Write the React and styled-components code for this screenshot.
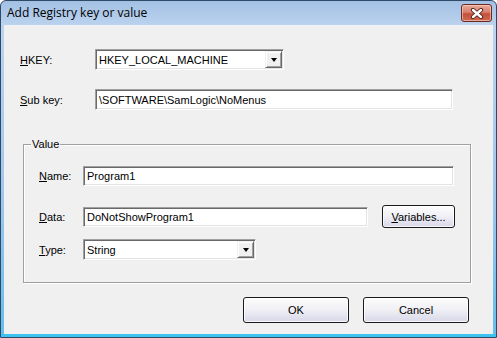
import React from 'react';
import styled, { createGlobalStyle } from 'styled-components';

const GlobalStyle = createGlobalStyle`
  html, body {
    margin: 0;
    padding: 0;
    background: #fff;
  }
  body {
    width: 497px;
    height: 338px;
    overflow: hidden;
    font-family: "Liberation Sans", Arial, sans-serif;
    font-size: 11px;
    color: #000;
  }
`;

const Window = styled.div`
  box-sizing: border-box;
  width: 497px;
  height: 338px;
  display: flex;
  flex-direction: column;
  border: 1px solid #2f4a68;
  border-radius: 6px 6px 0 0;
  padding: 0 3px 3px;
  background: linear-gradient(#a3c0e3, #bcd4ef 26px, #9ec6ec 200px, #62bfea);
  box-shadow: inset 0 -3px 0 #3cc4ef;
`;

const TitleBar = styled.div`
  height: 24px;
  display: flex;
  align-items: flex-start;
  justify-content: space-between;
  padding: 0 1px 0 3px;
`;

const Title = styled.div`
  font-family: "Open Sans", "Noto Sans", sans-serif;
  font-size: 12px;
  line-height: 24px;
  color: #000;
`;

const CloseButton = styled.div`
  box-sizing: border-box;
  margin-top: 3px;
  width: 31px;
  height: 18px;
  border: 1px solid #6a2a22;
  border-radius: 3px;
  background: linear-gradient(#e9a99a, #d8806c 45%, #c4503a 55%, #cf6a52);
  box-shadow: inset 0 0 0 1px rgba(255, 220, 210, 0.55);
  display: flex;
  align-items: center;
  justify-content: center;
`;

const Client = styled.div`
  flex: 1;
  background: #f0f0f0;
  display: flex;
  flex-direction: column;
  padding: 24px 0 0 16px;
`;

const Row = styled.div`
  display: flex;
  align-items: center;
  height: ${p => p.h}px;
  margin-top: ${p => p.mt || 0}px;
`;

const Label = styled.div`
  width: ${p => p.w}px;
  flex-shrink: 0;
  white-space: nowrap;
`;

const Key = styled.span`
  text-decoration: underline;
`;

const Field = styled.div`
  box-sizing: border-box;
  width: ${p => p.w}px;
  height: ${p => p.h}px;
  background: #fff;
  border: 1px solid;
  border-color: #a0a0a0 #fff #fff #a0a0a0;
  box-shadow: inset 1px 1px 0 #696969, inset -1px -1px 0 #e3e3e3;
  display: flex;
  align-items: center;
  padding: 0 2px 0 3px;
  white-space: nowrap;
  overflow: hidden;
`;

const ComboText = styled.div`
  flex: 1;
`;

const DropButton = styled.div`
  box-sizing: border-box;
  width: 17px;
  height: ${p => p.h}px;
  margin-right: -1px;
  background: #f0f0f0;
  border: 1px solid;
  border-color: #f0f0f0 #696969 #696969 #f0f0f0;
  box-shadow: inset 1px 1px 0 #fff, inset -1px -1px 0 #a0a0a0;
  display: flex;
  align-items: center;
  justify-content: center;
`;

const Arrow = styled.div`
  width: 0;
  height: 0;
  border-left: 3.5px solid transparent;
  border-right: 3.5px solid transparent;
  border-top: 4px solid #000;
  margin-top: 1px;
`;

const Group = styled.div`
  position: relative;
  box-sizing: border-box;
  margin: 34px 0 0 3px;
  width: 448px;
  height: 139px;
  border: 1px solid #a0a0a0;
  box-shadow: inset 1px 1px 0 #fff, 1px 1px 0 #fff;
  padding: 21px 0 0 15px;
`;

const Legend = styled.div`
  position: absolute;
  top: -7px;
  left: 7px;
  padding: 0 1px;
  background: #f0f0f0;
  line-height: 13px;
`;

const Button = styled.div`
  box-sizing: border-box;
  width: ${p => p.w}px;
  height: ${p => p.h}px;
  border: 1px solid #1a1a1a;
  border-radius: 3px;
  background: linear-gradient(#fdfdfd, #f1f1f6 45%, #d8d7e9);
  box-shadow: inset 0 0 0 1px rgba(255, 255, 255, 0.8);
  display: flex;
  align-items: center;
  justify-content: center;
  margin-left: ${p => p.ml || 0}px;
`;

const ButtonRow = styled.div`
  display: flex;
  justify-content: flex-end;
  gap: 14px;
  margin-top: 14px;
  padding-right: 24px;
`;

function Combo({ w, h, value }) {
  return (
    <Field w={w} h={h} style={{ paddingRight: 2 }}>
      <ComboText>{value}</ComboText>
      <DropButton h={h - 4}>
        <Arrow />
      </DropButton>
    </Field>
  );
}

export default function App() {
  return (
    <>
      <GlobalStyle />
      <Window>
        <TitleBar>
          <Title>Add Registry key or value</Title>
          <CloseButton>
            <svg width="14" height="11" viewBox="0 0 14 11">
              <path d="M3 2 L11 9 M11 2 L3 9" stroke="#4a2019" strokeWidth="4.2" strokeLinecap="round" />
              <path d="M3 2 L11 9 M11 2 L3 9" stroke="#fff" strokeWidth="2.4" strokeLinecap="round" />
            </svg>
          </CloseButton>
        </TitleBar>
        <Client>
          <Row h={21}>
            <Label w={75}><Key>H</Key>KEY:</Label>
            <Combo w={189} h={21} value="HKEY_LOCAL_MACHINE" />
          </Row>
          <Row h={21} mt={19}>
            <Label w={75}><Key>S</Key>ub key:</Label>
            <Field w={358} h={21}>\SOFTWARE\SamLogic\NoMenus</Field>
          </Row>
          <Group>
            <Legend>Value</Legend>
            <Row h={20}>
              <Label w={44}><Key>N</Key>ame:</Label>
              <Field w={371} h={20}>Program1</Field>
            </Row>
            <Row h={23} mt={19}>
              <Label w={44}><Key>D</Key>ata:</Label>
              <Field w={285} h={20}>DoNotShowProgram1</Field>
              <Button w={73} h={23} ml={14}><span><Key>V</Key>ariables...</span></Button>
            </Row>
            <Row h={21} mt={11}>
              <Label w={44}><Key>T</Key>ype:</Label>
              <Combo w={173} h={21} value="String" />
            </Row>
          </Group>
          <ButtonRow>
            <Button w={106} h={26}>OK</Button>
            <Button w={106} h={26}>Cancel</Button>
          </ButtonRow>
        </Client>
      </Window>
    </>
  );
}
